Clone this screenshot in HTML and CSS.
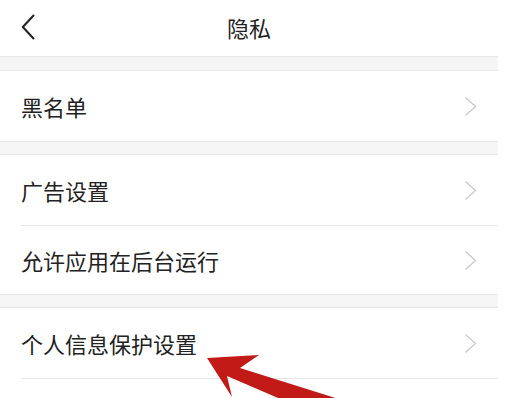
FILE: index.html
```html
<!DOCTYPE html>
<html lang="zh-CN">
<head>
<meta charset="utf-8">
<title>隐私</title>
<link rel="stylesheet" href="styles.css">
</head>
<body>
<div class="app">
  <header class="nav">
    <span class="back">
      <svg width="14" height="26" viewBox="0 0 14 26"><path d="M12.5 1.5 L1.8 13 L12.5 24.5" fill="none" stroke="#222" stroke-width="2" stroke-linecap="round" stroke-linejoin="round"/></svg>
    </span>
    <h1 class="title">隐私</h1>
  </header>
  <div class="gap gap-first"></div>
  <section class="group">
    <div class="row"><div class="row-inner"><span class="label">黑名单</span><span class="chev"><svg width="12" height="19" viewBox="0 0 12 19"><path d="M1 1 L10.5 9.5 L1 18" fill="none" stroke="#cbcbcb" stroke-width="1.4" stroke-linecap="round" stroke-linejoin="round"/></svg></span></div></div>
  </section>
  <div class="gap"></div>
  <section class="group">
    <div class="row"><div class="row-inner"><span class="label">广告设置</span><span class="chev"><svg width="12" height="19" viewBox="0 0 12 19"><path d="M1 1 L10.5 9.5 L1 18" fill="none" stroke="#cbcbcb" stroke-width="1.4" stroke-linecap="round" stroke-linejoin="round"/></svg></span></div></div>
    <div class="row"><div class="row-inner sep"><span class="label">允许应用在后台运行</span><span class="chev"><svg width="12" height="19" viewBox="0 0 12 19"><path d="M1 1 L10.5 9.5 L1 18" fill="none" stroke="#cbcbcb" stroke-width="1.4" stroke-linecap="round" stroke-linejoin="round"/></svg></span></div></div>
  </section>
  <div class="gap"></div>
  <section class="group">
    <div class="row"><div class="row-inner"><span class="label">个人信息保护设置</span><span class="chev"><svg width="12" height="19" viewBox="0 0 12 19"><path d="M1 1 L10.5 9.5 L1 18" fill="none" stroke="#cbcbcb" stroke-width="1.4" stroke-linecap="round" stroke-linejoin="round"/></svg></span></div></div>
    <div class="row"><div class="row-inner sep"><span class="label"></span></div></div>
  </section>
</div>
<svg class="arrow" width="508" height="398" viewBox="0 0 508 398">
  <polygon points="207,358 259,355 240,368 345,401 285,401 227,376 232,397" fill="#c11a17"/>
</svg>
</body>
</html>
```
FILE: styles.css
```css
html, body {
  margin: 0;
  padding: 0;
  background: #ffffff;
}
body {
  width: 508px;
  height: 398px;
  overflow: hidden;
  position: relative;
  font-family: "Noto Sans CJK SC", "Noto Sans", sans-serif;
  color: #222222;
}
.app {
  width: 498px;
}
.nav {
  height: 56px;
  border-bottom: 1px solid #e8e8e8;
  display: flex;
  align-items: center;
  justify-content: center;
  position: relative;
}
.back {
  position: absolute;
  left: 21px;
  top: 14px;
  display: flex;
}
.title {
  margin: 0;
  font-size: 22px;
  font-weight: 400;
  line-height: 1;
  color: #222222;
  margin-top: -2px;
}
.gap {
  height: 12px;
  background: #f5f5f5;
}
.gap.gap-first {
  height: 13px;
}
.group {
  border-top: 1px solid #e8e8e8;
  border-bottom: 1px solid #e8e8e8;
}
.row {
  padding-left: 21px;
}
.row-inner {
  box-sizing: border-box;
  height: 70px;
  display: flex;
  align-items: center;
  justify-content: space-between;
  padding-right: 21px;
}
.row-inner.sep {
  border-top: 1px solid #e8e8e8;
  height: 69px;
}
.label {
  font-size: 22px;
  line-height: 1;
  color: #222222;
}
.chev {
  display: flex;
}
.arrow {
  position: absolute;
  left: 0;
  top: 0;
  pointer-events: none;
}
```
